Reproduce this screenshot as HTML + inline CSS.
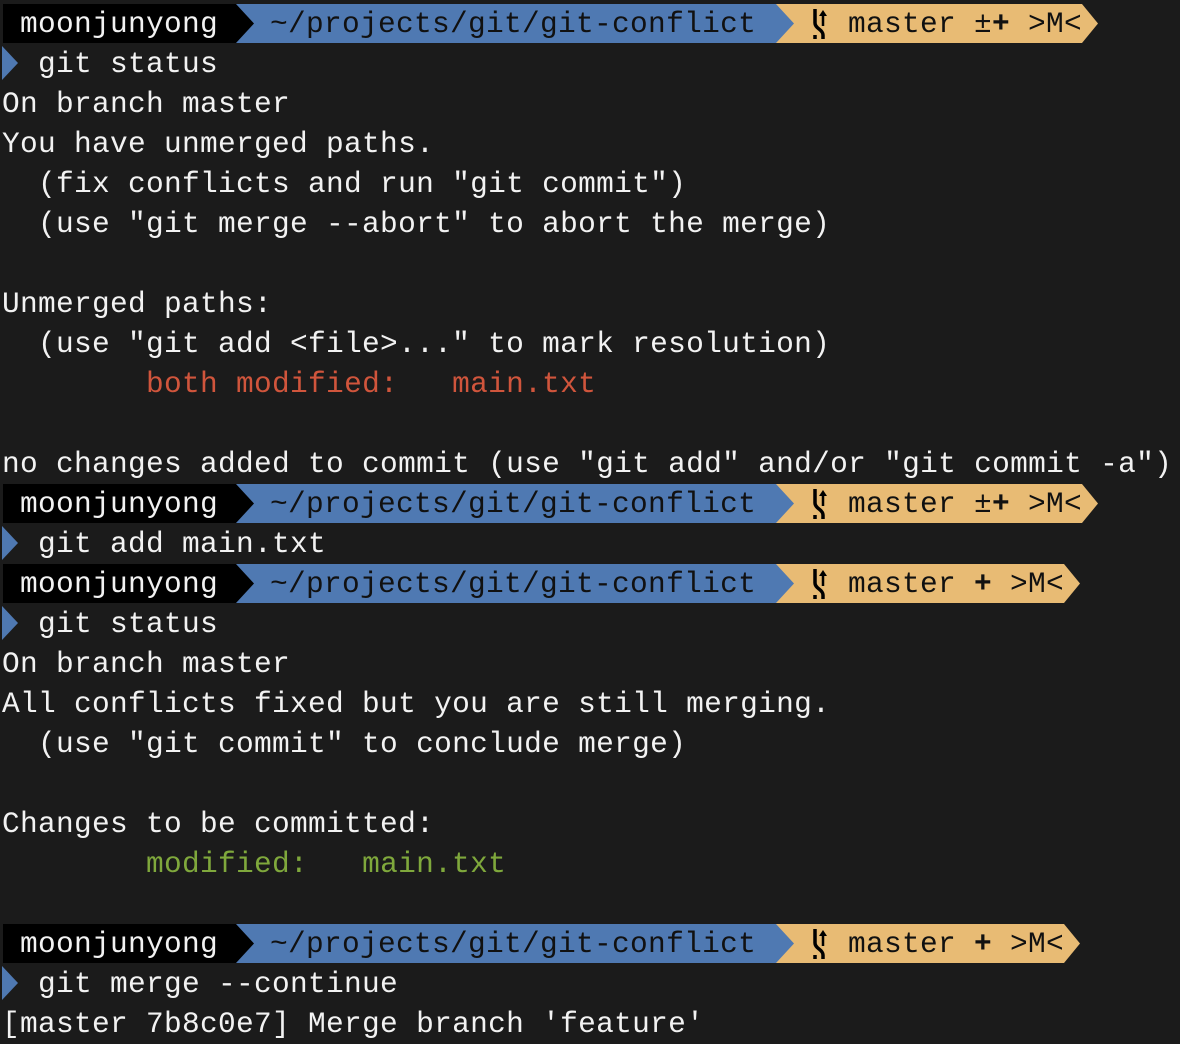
<!DOCTYPE html>
<html><head><meta charset="utf-8"><style>
html,body{margin:0;padding:0;background:#1b1b1b;width:1180px;height:1042px;overflow:hidden}
pre{position:absolute;left:2px;top:4px;margin:0;font:29.5px/40px "Liberation Mono",monospace;letter-spacing:0.3px;color:#f2f2f2;white-space:pre}
.r{color:#d0553c}.g{color:#7fa83c}
.bar{position:absolute;left:0;height:40px;width:1180px;font:29.5px/40px "Liberation Mono",monospace;letter-spacing:0.3px;white-space:pre}
.seg{position:absolute;top:1px;height:39px}
.t{position:absolute;top:1px;line-height:40px}
.pa{position:absolute;left:2px;width:0;height:0;border-top:17px solid transparent;border-bottom:17px solid transparent;border-left:16px solid #4f79b2}
</style></head><body>
<pre>

  git status
On branch master
You have unmerged paths.
  (fix conflicts and run "git commit")
  (use "git merge --abort" to abort the merge)

Unmerged paths:
  (use "git add &lt;file&gt;..." to mark resolution)
        <span class="r">both modified:   main.txt</span>

no changes added to commit (use "git add" and/or "git commit -a")

  git add main.txt

  git status
On branch master
All conflicts fixed but you are still merging.
  (use "git commit" to conclude merge)

Changes to be committed:
        <span class="g">modified:   main.txt</span>


  git merge --continue
[master 7b8c0e7] Merge branch 'feature'</pre>

<div class="pa" style="top:46px"></div>
<div class="pa" style="top:526px"></div>
<div class="pa" style="top:606px"></div>
<div class="pa" style="top:966px"></div>

<div id="b0" class="bar" style="top:3px"></div>
<div id="b1" class="bar" style="top:483px"></div>
<div id="b2" class="bar" style="top:563px"></div>
<div id="b3" class="bar" style="top:923px"></div>
<script>
function bar(id,flag,yEnd){
 var e=document.getElementById(id);
 var tip=yEnd+16;
 e.innerHTML=
 '<div class="seg" style="left:3px;width:233px;background:#000"></div>'+
 '<div class="seg" style="left:236px;width:540px;background:#4f79b2"></div>'+
 '<div class="seg" style="left:776px;width:'+(yEnd-776)+'px;background:#e8bb74"></div>'+
 '<svg style="position:absolute;left:0;top:1px" width="1180" height="39"><polygon points="236,0 254,19.5 236,39" fill="#000"/><polygon points="776,0 794,19.5 776,39" fill="#4f79b2"/><polygon points="'+yEnd+',0 '+tip+',19.5 '+yEnd+',39" fill="#e8bb74"/>'+
 '<path d="M815 5 V19 Q815 22 819 25 Q823 28 823 31 V35" stroke="#000" stroke-width="3.5" fill="none"/><path d="M815 31 V35" stroke="#000" stroke-width="3.5"/><path d="M823 22 V10" stroke="#000" stroke-width="2.5"/><polygon points="819,12 823,6 827,12" fill="#000"/></svg>'+
 '<span class="t" style="left:20px;color:#f2f2f2">moonjunyong</span>'+
 '<span class="t" style="left:270px;color:#111">~/projects/git/git-conflict</span>'+
 '<span class="t" style="left:848px;color:#111">master '+flag+' &gt;M&lt;</span>';
}
bar('b0','±<b>+</b>',1082);
bar('b1','±<b>+</b>',1082);
bar('b2','<b>+</b>',1064);
bar('b3','<b>+</b>',1064);
</script>
</body></html>
